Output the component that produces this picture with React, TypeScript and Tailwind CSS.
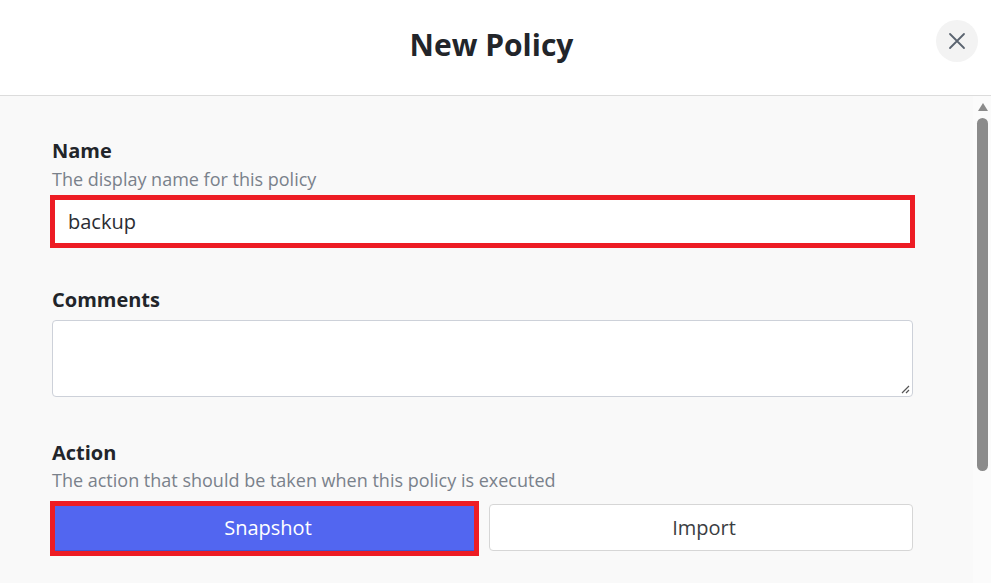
import React from "react";

export default function App() {
  return (
    <div
      className="w-[991px] h-[583px] overflow-hidden bg-[#f9f9f9] flex flex-col"
      style={{ fontFamily: '"Open Sans", "Noto Sans", sans-serif' }}
    >
      <header className="h-[96px] shrink-0 bg-white border-b border-[#dcdcdc] flex items-center justify-center relative">
        <h1 className="text-[30px] font-bold text-[#22252a] leading-none -mt-[6px] -ml-[8px]">New Policy</h1>
        <button className="absolute left-[936px] top-[20px] w-[42px] h-[42px] rounded-full bg-[#f3f3f3] flex items-center justify-center">
          <svg width="18" height="18" viewBox="0 0 18 18" fill="none" stroke="#5b6470" strokeWidth="1.8" strokeLinecap="round">
            <path d="M2 2 L16 16 M16 2 L2 16" />
          </svg>
        </button>
      </header>
      <div className="flex flex-1 min-h-0">
        <div className="flex-1 pl-[50px] pr-[58px] pt-[42px] flex flex-col">
          <div className="pl-[2px] text-[20px] font-bold text-[#22252a] leading-[26px]">Name</div>
          <div className="pl-[2px] mt-[3px] text-[18px] text-[#7a818b] leading-[25px]">The display name for this policy</div>
          <div className="mt-[3px] h-[53px] border-[5px] border-[#ed1c24] bg-white flex items-center pl-[13px] text-[20px] text-[#2a2d33]">
            backup
          </div>
          <div className="pl-[2px] mt-[39px] text-[20px] font-bold text-[#22252a] leading-[26px]">Comments</div>
          <div className="ml-[2px] mt-[7px] h-[77px] w-[861px] bg-white border border-[#cdd1d9] rounded-[4px] relative">
            <svg className="absolute right-[2px] bottom-[2px]" width="9" height="9" viewBox="0 0 9 9" stroke="#555" strokeWidth="1.2">
              <path d="M1 8 L8 1 M5 8 L8 5" />
            </svg>
          </div>
          <div className="pl-[2px] mt-[43px] text-[20px] font-bold text-[#22252a] leading-[26px]">Action</div>
          <div className="pl-[2px] mt-[2px] text-[18px] text-[#7a818b] leading-[25px]">The action that should be taken when this policy is executed</div>
          <div className="mt-[8px] flex items-start">
            <div className="w-[429px] h-[55px] border-[5px] border-[#ed1c24] flex">
              <div className="flex-1 bg-[#5266f0] border-b border-[#4456cf] flex items-center justify-center pl-[7px] text-white text-[20px]">
                Snapshot
              </div>
            </div>
            <div className="ml-[10px] mt-[3px] w-[424px] h-[47px] bg-white border border-[#d6d6d6] rounded-[4px] flex items-center justify-center pl-[6px] text-[20px] text-[#3a3d42]">
              Import
            </div>
          </div>
        </div>
        <div className="w-[18px] shrink-0 bg-[#fbfbfb] flex flex-col items-center pt-[6px]">
          <svg width="12" height="10" viewBox="0 0 12 10" className="ml-[1px]">
            <path d="M6 1 L11 9 L1 9 Z" fill="#8b8b8b" />
          </svg>
          <div className="mt-[6px] ml-[1px] w-[11px] h-[353px] rounded-full bg-[#8b8b8b]" />
        </div>
      </div>
    </div>
  );
}
